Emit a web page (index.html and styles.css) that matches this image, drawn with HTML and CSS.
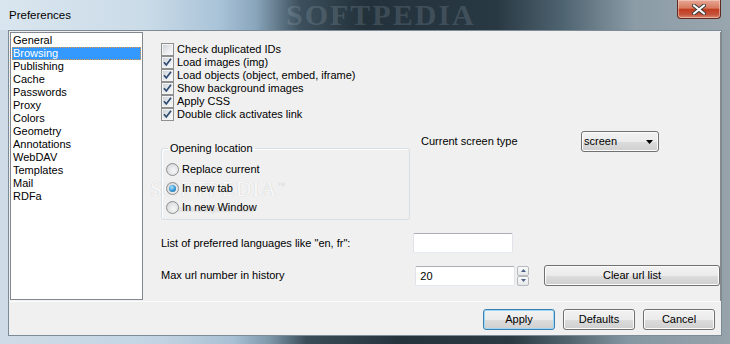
FILE: index.html
```html
<!DOCTYPE html>
<html lang="en">
<head>
    <meta charset="UTF-8">
    <title>Preferences</title>
    <link rel="stylesheet" href="styles.css">
</head>
<body>

    <div class="window">

        <!-- Title bar -->
        <div class="titlebar">
            <span class="title">Preferences</span>
            <span class="title-mark">SOFTPEDIA</span>
            <div class="close-btn">
                <svg width="14" height="11" viewBox="0 0 14 11">
                    <path d="M2 1.5 L12 9.5 M12 1.5 L2 9.5" stroke="#3a3a3a" stroke-width="4" stroke-linecap="round"/>
                    <path d="M2 1.5 L12 9.5 M12 1.5 L2 9.5" stroke="#ffffff" stroke-width="2.2" stroke-linecap="round"/>
                </svg>
            </div>
        </div>

        <div class="client">
            <div class="main">

                <!-- Categories -->
                <ul class="category-list">
                    <li>General</li>
                    <li class="selected">Browsing</li>
                    <li>Publishing</li>
                    <li>Cache</li>
                    <li>Passwords</li>
                    <li>Proxy</li>
                    <li>Colors</li>
                    <li>Geometry</li>
                    <li>Annotations</li>
                    <li>WebDAV</li>
                    <li>Templates</li>
                    <li>Mail</li>
                    <li>RDFa</li>
                </ul>

                <!-- Browsing page -->
                <div class="panel">
                    <!-- watermark, behind the controls -->
                    <div class="mark">
                        <span class="mark-big">SOFTPEDIA<sup>™</sup></span>
                        <span class="mark-small">www.softpedia.com</span>
                    </div>

                    <div class="checks">
                        <div class="check"><span class="box"></span>Check duplicated IDs</div>
                        <div class="check"><span class="box"><svg width="11" height="11" viewBox="0 0 11 11"><path d="M2 5.2 L4.3 8 L9 1.8" fill="none" stroke="#2d4a72" stroke-width="1.7"/></svg></span>Load images (img)</div>
                        <div class="check"><span class="box"><svg width="11" height="11" viewBox="0 0 11 11"><path d="M2 5.2 L4.3 8 L9 1.8" fill="none" stroke="#2d4a72" stroke-width="1.7"/></svg></span>Load objects (object, embed, iframe)</div>
                        <div class="check"><span class="box"><svg width="11" height="11" viewBox="0 0 11 11"><path d="M2 5.2 L4.3 8 L9 1.8" fill="none" stroke="#2d4a72" stroke-width="1.7"/></svg></span>Show background images</div>
                        <div class="check"><span class="box"><svg width="11" height="11" viewBox="0 0 11 11"><path d="M2 5.2 L4.3 8 L9 1.8" fill="none" stroke="#2d4a72" stroke-width="1.7"/></svg></span>Apply CSS</div>
                        <div class="check"><span class="box"><svg width="11" height="11" viewBox="0 0 11 11"><path d="M2 5.2 L4.3 8 L9 1.8" fill="none" stroke="#2d4a72" stroke-width="1.7"/></svg></span>Double click activates link</div>
                    </div>

                    <div class="location-row">
                        <fieldset class="group">
                            <legend>Opening location</legend>
                            <div class="radio"><span class="dot"></span>Replace current</div>
                            <div class="radio"><span class="dot on"></span>In new tab</div>
                            <div class="radio"><span class="dot"></span>In new Window</div>
                        </fieldset>
                        <div class="screen-type">
                            <span class="screen-label">Current screen type</span>
                            <div class="select">
                                <span>screen</span>
                                <svg width="7" height="4" viewBox="0 0 7 4"><path d="M0 0 H7 L3.5 4 Z" fill="#000"/></svg>
                            </div>
                        </div>
                    </div>

                    <div class="form-row">
                        <span class="lang-label">List of preferred languages like "en, fr":</span>
                        <div class="textbox"></div>
                    </div>

                    <div class="form-row history">
                        <span class="history-label">Max url number in history</span>
                        <div class="textbox">20</div>
                        <div class="spin">
                            <span class="spin-btn"><svg width="5" height="3" viewBox="0 0 5 3"><path d="M0 3 H5 L2.5 0 Z" fill="#4d6185"/></svg></span>
                            <span class="spin-btn"><svg width="5" height="3" viewBox="0 0 5 3"><path d="M0 0 H5 L2.5 3 Z" fill="#4d6185"/></svg></span>
                        </div>
                        <div class="btn clear">Clear url list</div>
                    </div>
                </div>
            </div>

            <!-- Dialog buttons -->
            <div class="button-bar">
                <div class="btn default">Apply</div>
                <div class="btn">Defaults</div>
                <div class="btn">Cancel</div>
            </div>
        </div>
    </div>

</body>
</html>
```

FILE: styles.css
```css
/* General */
* {
    margin: 0;
    padding: 0;
    box-sizing: border-box;
}

body {
    font-family: "Liberation Sans", Arial, sans-serif;
    font-size: 11px;
    line-height: 13px;
    color: #000;
    background: #fff;
}

/* Window frame */
.window {
    width: 730px;
    height: 344px;
    display: flex;
    flex-direction: column;
    overflow: hidden;
    background: linear-gradient(90deg, #cfdce7 0%, #c2d4e3 22%, #a8c0d3 32%, #7d96a8 37%, #3a4c58 42%, #25333c 55%, #2b3a43 70%, #52656f 78%, #8597a2 86%, #97a3ab 100%);
}

.titlebar {
    height: 30px;
    display: flex;
    align-items: center;
    justify-content: space-between;
    padding-left: 9px;
    position: relative;
    background: linear-gradient(90deg, #dae6ef 0%, #cadbe8 20%, #a9c3d8 30%, #8aa6bc 35%, #3d505d 41%, #22313a 50%, #293944 68%, #4e6370 77%, #8b9ca7 87%, #9aa6ae 100%);
}

.title {
    font-size: 11.5px;
    color: #000;
    margin-top: 1px;
}

.title-mark {
    position: absolute;
    left: 286px;
    top: 1px;
    font-family: "Liberation Serif", serif;
    font-weight: bold;
    font-size: 30px;
    line-height: 28px;
    letter-spacing: 2px;
    color: rgba(200, 215, 225, 0.18);
}

.close-btn {
    align-self: flex-start;
    width: 44px;
    height: 19px;
    margin-right: 9px;
    border: 1px solid #5e2a22;
    border-top: none;
    border-radius: 0 0 4px 4px;
    display: flex;
    align-items: center;
    justify-content: center;
    background: linear-gradient(#e6a896 0%, #d8795f 45%, #c13d20 52%, #c5523a 80%, #d98a6f 100%);
    box-shadow: inset 0 0 0 1px rgba(255, 220, 210, 0.5);
}

/* Client area */
.client {
    flex: 1;
    margin: 0 8px 8px 8px;
    border: 1px solid #7d8b96;
    background-color: #f0f0f0;
    display: flex;
    flex-direction: column;
}

.main {
    height: 270px;
    display: flex;
    padding: 1px 0 0 1px;
}

.category-list {
    list-style: none;
    width: 133px;
    height: 268px;
    border: 1px solid #828790;
    background-color: #fff;
    padding-top: 1px;
}

.category-list li {
    height: 13px;
    margin: 0 1px;
    padding-left: 1px;
    color: #000;
}

.category-list li.selected {
    background-color: #3399ff;
    color: #fff;
    outline: 1px dotted #e8954a;
    outline-offset: -1px;
}

.panel {
    flex: 1;
    margin-left: 1px;
    padding: 11px 0 0 17px;
    position: relative;
    overflow: hidden;
    border-right: 1px solid #8a8a8a;
}

.checks,
.location-row,
.form-row {
    position: relative;
    z-index: 1;
}

/* Checkboxes */
.check {
    height: 13px;
    display: flex;
    align-items: center;
}

.box {
    width: 13px;
    height: 13px;
    margin-right: 3px;
    border: 1px solid #8e8f8f;
    background: linear-gradient(135deg, #c9cdd3 0%, #eceef0 60%, #fafafa 100%);
    box-shadow: inset 0 0 0 1px #f4f4f4;
    display: flex;
    align-items: center;
    justify-content: center;
}

/* Opening location */
.location-row {
    display: flex;
    margin-top: 10px;
}

.group {
    width: 249px;
    margin-top: 11px;
    padding: 5px 0 2px 4px;
    border: 1px solid #d5dfe5;
    border-radius: 3px;
    box-shadow: inset 1px 1px 0 #fff;
}

.group legend {
    margin-left: 2px;
    padding: 0 2px;
    line-height: 13px;
}

.radio {
    height: 19px;
    display: flex;
    align-items: center;
}

.dot {
    width: 13px;
    height: 13px;
    margin-right: 3px;
    border-radius: 50%;
    border: 1px solid #8e8f8f;
    background: radial-gradient(circle at 60% 60%, #f7f7f7 0%, #e2e3e5 55%, #c4c7cb 100%);
    position: relative;
}

.dot.on::after {
    content: "";
    position: absolute;
    left: 2px;
    top: 2px;
    width: 7px;
    height: 7px;
    border-radius: 50%;
    background: radial-gradient(circle at 40% 35%, #b9e6fb 0%, #43a3dc 45%, #0f5e99 100%);
}

.screen-type {
    display: flex;
    align-items: center;
    height: 21px;
    margin-left: 11px;
}

.screen-label {
    width: 160px;
}

.select {
    width: 78px;
    height: 21px;
    border: 1px solid #707070;
    border-radius: 3px;
    padding: 0 5px 0 2px;
    display: flex;
    align-items: center;
    justify-content: space-between;
    background: linear-gradient(#f2f2f2 0%, #ebebeb 50%, #dddddd 51%, #cfcfcf 100%);
    box-shadow: inset 0 0 0 1px #fcfcfc;
}

/* Text rows */
.form-row {
    display: flex;
    align-items: center;
    margin-top: 13px;
}

.form-row.history {
    margin-top: 12px;
}

.lang-label {
    width: 252px;
}

.history-label {
    width: 255px;
}

.textbox {
    width: 100px;
    height: 20px;
    background-color: #fff;
    border: 1px solid #e2e3ea;
    border-top-color: #abadb3;
    border-bottom-color: #e3e9ef;
    border-radius: 2px;
    padding: 3px 0 0 4px;
}

.spin {
    width: 12px;
    height: 20px;
    margin-left: 2px;
    display: flex;
    flex-direction: column;
}

.spin-btn {
    height: 10px;
    border: 1px solid #b6b9bd;
    border-radius: 2px;
    background: linear-gradient(#fbfbfb, #e6e7e9);
    display: flex;
    align-items: center;
    justify-content: center;
}

/* Buttons */
.btn {
    width: 72px;
    height: 21px;
    border: 1px solid #707070;
    border-radius: 3px;
    display: flex;
    align-items: center;
    justify-content: center;
    background: linear-gradient(#f2f2f2 0%, #ebebeb 50%, #dddddd 51%, #cfcfcf 100%);
    box-shadow: inset 0 0 0 1px #fcfcfc;
}

.btn.clear {
    width: 176px;
    margin-left: 15px;
    flex-shrink: 0;
}

.btn.default {
    border-color: #3c7fb1;
    box-shadow: inset 0 0 0 1px #9bd8f6;
}

.button-bar {
    flex: 1;
    display: flex;
    justify-content: flex-end;
    gap: 8px;
    padding: 7px 6px 0 0;
    border-top: 1px solid #fcfcfc;
}

/* Watermark */
.mark {
    position: absolute;
    left: 6px;
    top: 143px;
    z-index: 0;
    display: flex;
    flex-direction: column;
    pointer-events: none;
}

.mark-big {
    font-family: "Liberation Serif", serif;
    font-size: 22px;
    line-height: 22px;
    letter-spacing: 1px;
    color: #f7f7f7;
    text-shadow: 0 0 1px #c4c4c4;
}

.mark-big sup {
    font-size: 8px;
    color: #d8d8d8;
    text-shadow: none;
}

.mark-small {
    margin: 3px 0 0 26px;
    font-size: 9px;
    color: #e6e6e6;
    text-shadow: 0 0 1px #c8c8c8;
}
```
